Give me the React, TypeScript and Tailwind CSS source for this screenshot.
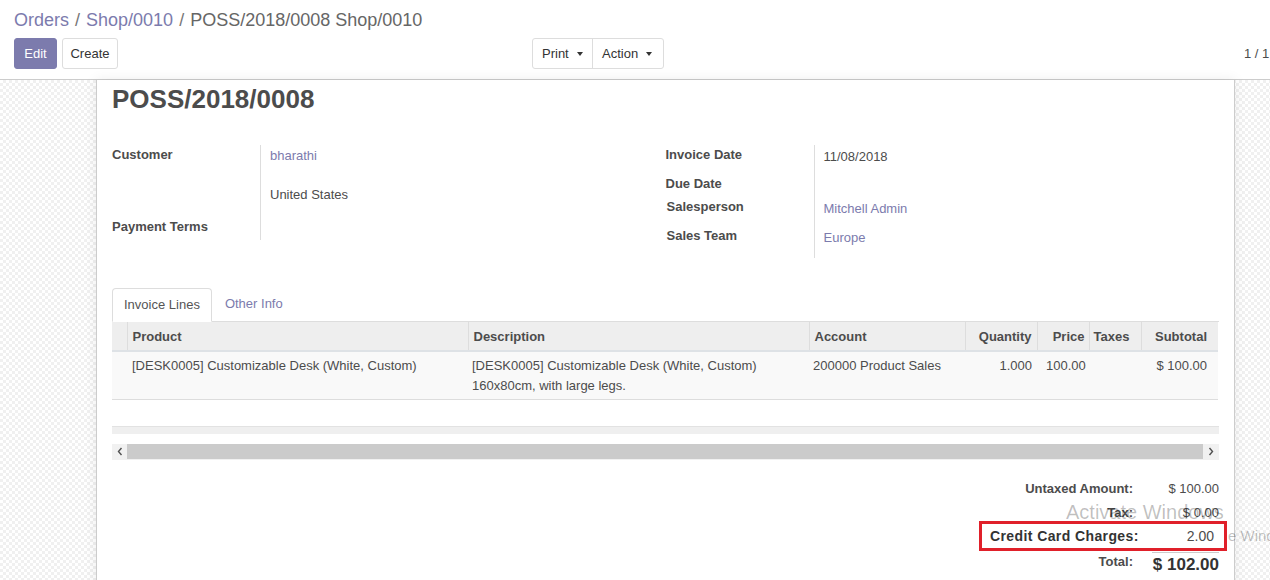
const purple = "text-[#7c7bad]";

function Caret() {
  return (
    <span className="inline-block ml-[8px] align-middle border-x-[3px] border-x-transparent border-t-[4px] border-t-[#333333]" />
  );
}

function Chevron({ dir }: { dir: "left" | "right" }) {
  return (
    <svg width="6" height="9" viewBox="0 0 6 9" className="shrink-0">
      <polyline
        points={dir === "left" ? "4.5,1 1.5,4.5 4.5,8" : "1.5,1 4.5,4.5 1.5,8"}
        fill="none"
        stroke="#505050"
        strokeWidth="1.4"
      />
    </svg>
  );
}

const columns = [
  { label: "", w: "w-[15px]", align: "text-left" },
  { label: "Product", w: "w-[341px]", align: "text-left" },
  { label: "Description", w: "w-[341px]", align: "text-left" },
  { label: "Account", w: "w-[156px]", align: "text-left" },
  { label: "Quantity", w: "w-[72px]", align: "text-right" },
  { label: "Price", w: "w-[52px]", align: "text-right" },
  { label: "Taxes", w: "w-[52px]", align: "text-left" },
  { label: "Subtotal", w: "w-[77px]", align: "text-right" },
];

function ControlPanel() {
  return (
    <div className="h-[80px] border-b border-[#cccccc] px-[14px] bg-white">
      <div className="h-[38px] pt-[8px] text-[18px] leading-[24px] whitespace-nowrap">
        <span className={purple}>Orders</span>
        <span className="mx-[6px] text-[#777777]">/</span>
        <span className={purple}>Shop/0010</span>
        <span className="mx-[6px] text-[#777777]">/</span>
        <span className="text-[#666666]">POSS/2018/0008 Shop/0010</span>
      </div>
      <div className="flex items-start h-[31px] whitespace-nowrap">
        <div className="flex gap-[5px] w-[518px] shrink-0">
          <button className="w-[43px] h-[31px] rounded-[3px] bg-[#7c7bad] border border-[#7c7bad] text-white">
            Edit
          </button>
          <button className="w-[56px] h-[31px] rounded-[3px] bg-white border border-[#dddddd] text-[#333333]">
            Create
          </button>
        </div>
        <div className="flex shrink-0 h-[31px] rounded-[3px] border border-[#dddddd] text-[#333333]">
          <button className="w-[59px] h-full text-left pl-[9px]">
            Print
            <Caret />
          </button>
          <button className="w-[71px] h-full text-left pl-[9px] border-l border-[#dddddd]">
            Action
            <Caret />
          </button>
        </div>
        <div className="ml-[580px] shrink-0 leading-[31px] text-[#4c4c4c]">1 / 1</div>
      </div>
    </div>
  );
}

function Row({
  label,
  h,
  pt,
  children,
}: {
  label: string;
  h: string;
  pt: string;
  children?: React.ReactNode;
}) {
  return (
    <div className={`flex ${h}`}>
      <div className={`w-[149px] shrink-0 border-r border-[#dddddd] font-bold leading-[18px] ${pt}`}>
        {label}
      </div>
      <div className={`pl-[9px] leading-[18px] ${pt}`}>{children}</div>
    </div>
  );
}

function Groups() {
  return (
    <div className="grid grid-cols-2 mt-[31px]">
      <div>
        <div className="flex h-[70px]">
          <div className="w-[149px] shrink-0 border-r border-[#dddddd] font-bold leading-[18px] pt-[1px]">
            Customer
          </div>
          <div className="pl-[9px] leading-[19.5px] pt-[1px]">
            <div className={purple}>bharathi</div>
            <div>&nbsp;</div>
            <div>United States</div>
          </div>
        </div>
        <Row label="Payment Terms" h="h-[25px]" pt="pt-[3px]" />
      </div>
      <div>
        <div className="flex h-[26px]">
          <div className="w-[149px] shrink-0 border-r border-[#dddddd] font-bold leading-[18px] pt-[1px]">
            Invoice Date
          </div>
          <div className="pl-[9px] leading-[18px] pt-[3px]">11/08/2018</div>
        </div>
        <Row label="Due Date" h="h-[23px]" pt="pt-[4px]" />
        <div className="flex h-[29px]">
          <div className="w-[149px] shrink-0 border-r border-[#dddddd] font-bold leading-[18px] pt-[4px] pl-[1px]">
            Salesperson
          </div>
          <div className={`pl-[9px] leading-[18px] pt-[6px] ${purple}`}>Mitchell Admin</div>
        </div>
        <div className="flex h-[35px]">
          <div className="w-[149px] shrink-0 border-r border-[#dddddd] font-bold leading-[18px] pt-[4px] pl-[1px]">
            Sales Team
          </div>
          <div className={`pl-[9px] leading-[18px] pt-[6px] ${purple}`}>Europe</div>
        </div>
      </div>
    </div>
  );
}

function Lines() {
  return (
    <div className="mt-[30px]">
      <div className="flex border-b border-[#dddddd] h-[34px]">
        <div className="h-[34px] -mb-px px-[11px] leading-[32px] bg-white border border-[#dddddd] border-b-white rounded-t-[4px] text-[#555555]">
          Invoice Lines
        </div>
        <div className={`h-[33px] px-[13px] leading-[32px] ${purple}`}>Other Info</div>
      </div>
      <table className="w-[1106px] table-fixed border-collapse">
        <thead>
          <tr className="bg-[#eeeeee] h-[29px] border-b-2 border-[#dee2e6]">
            {columns.map((c, i) => (
              <th
                key={i}
                className={`${c.w} ${c.align} font-bold px-[5px] pt-[1px] ${i === 7 ? "pr-[11px]" : ""} ${
                  i < 7 ? "border-r border-[#dddddd]" : ""
                } ${i === 5 ? "pr-[4px]" : ""} ${i === 6 ? "pl-[4px]" : ""}`}
              >
                {c.label}
              </th>
            ))}
          </tr>
        </thead>
        <tbody>
          <tr className="bg-[#f9f9f9] h-[48px] border-b border-[#dddddd] align-top leading-[20px]">
            <td />
            <td className="px-[5px] pt-[4px]">[DESK0005] Customizable Desk (White, Custom)</td>
            <td className="px-[4px] pt-[4px]">
              [DESK0005] Customizable Desk (White, Custom)
              <br />
              160x80cm, with large legs.
            </td>
            <td className="px-[4px] pt-[4px]">200000 Product Sales</td>
            <td className="px-[5px] pt-[4px] text-right">1.000</td>
            <td className="px-[10px] pl-[9px] pt-[4px] text-left">100.00</td>
            <td />
            <td className="pr-[11px] pt-[4px] text-right">$ 100.00</td>
          </tr>
        </tbody>
      </table>
      <div className="mt-[26px] h-[8px] border-t border-[#e2e2e2] bg-[#efefef]" />
      <div className="mt-[10px] h-[16px] flex items-center bg-[#f1f1f1]">
        <div className="w-[15px] flex justify-center">
          <Chevron dir="left" />
        </div>
        <div className="flex-1 h-[15px] bg-[#cbcbcb]" />
        <div className="w-[16px] flex justify-center">
          <Chevron dir="right" />
        </div>
      </div>
    </div>
  );
}

function Totals() {
  return (
    <div className="flex flex-col items-end mt-[20px] leading-[18px]">
      <div className="flex h-[24px]">
        <div className="font-bold text-right">Untaxed Amount:</div>
        <div className="w-[86px] text-right">$ 100.00</div>
      </div>
      <div className="flex h-[17px]">
        <div className="font-bold text-right">Tax:</div>
        <div className="w-[86px] text-right">$ 0.00</div>
      </div>
      <div className="-mr-[8px] w-[248px] h-[30px] border-[3px] border-[#e0202a] bg-white flex justify-between pl-[8px] pr-[10px] pt-[3px] relative z-10">
        <div className="font-bold text-[14px] tracking-[0.4px] text-[#333333]">Credit Card Charges:</div>
        <div className="text-[14px]">2.00</div>
      </div>
      <div className="flex h-[40px]">
        <div className="font-bold text-right pt-[2px]">Total:</div>
        <div className="w-[86px] flex justify-end">
          <div className="w-[67px] whitespace-nowrap border-t border-[#cccccc] mt-[1px] text-right font-bold text-[17px] leading-[24px] text-[#333333]">
            $ 102.00
          </div>
        </div>
      </div>
    </div>
  );
}

export default function App() {
  return (
    <div className="relative w-[1270px] h-[580px] overflow-hidden bg-white font-['Liberation_Sans',Arial,sans-serif] text-[13px] text-[#4c4c4c]">
      <ControlPanel />
      <div className="h-[500px] pl-[96px] bg-[repeating-conic-gradient(#f0f0f0_0_25%,#ffffff_0_50%)] bg-[length:6px_6px]">
        <div className="w-[1139px] h-[520px] bg-white border-x border-[#cccccc] px-[15px] shadow-[0_0_12px_rgba(0,0,0,0.08)]">
          <div className="pt-[4px] text-[26px] leading-[30px] font-bold text-[#4c4c4c]">POSS/2018/0008</div>
          <Groups />
          <Lines />
          <Totals />
        </div>
      </div>
      <div className="absolute left-[1066px] top-[502px] text-[20px] leading-[20px] text-black/25 whitespace-nowrap pointer-events-none">
        Activate Windows
      </div>
      <div className="absolute left-[1228px] top-[528px] text-[15px] leading-[16px] text-black/25 whitespace-nowrap pointer-events-none">
        e Windows
      </div>
    </div>
  );
}
